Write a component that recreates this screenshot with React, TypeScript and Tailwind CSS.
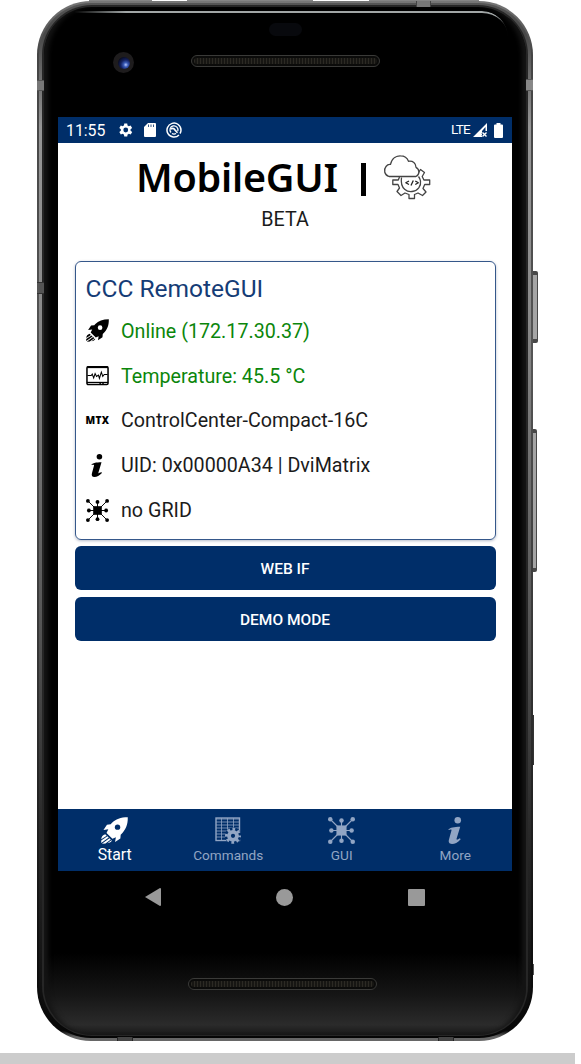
import React from "react";

function Rocket({ className, hole }: { className: string; hole: string }) {
  return (
    <svg viewBox="0 0 24 24" className={className} fill="currentColor">
      <path d="M23.800.2C17.500.2 13 1.800 9.800 5.200L8.600 6.500 5.300 6.900 2.200 11.600l4.300-.7-1.600 3.300 5.300 5.200 3-1.500-.7 4.300 4.700-3.200.3-3.300C22 11.500 24 6.800 23.800.2Z" />
      <circle cx="14.700" cy="9" r="2.400" fill={hole} />
      <path d="M3.800 15.300C1.500 16 .5 17.500.2 19.800l4.900-3.200ZM5.700 17.200.2 20.800v2.200l6.700-4.700ZM7.500 18.900.8 23.700l3.200-.2 4.700-3.400ZM9.200 20.600l-3.500 2.700c2.200-.3 3.400-1.200 4-2.400Z" />
    </svg>
  );
}

function Info({ className }: { className: string }) {
  return (
    <svg viewBox="0 0 24 24" className={className} fill="currentColor">
      <circle cx="14" cy="2.900" r="2.900" />
      <path d="M5.500 11.300C7.500 9.200 10.500 8.700 16.200 8.600l-3.200 10.600c-.4 1.500.8 1.100 2.900-.3l.7.9c-2.700 3-5.200 4.200-7.700 4.200-2.700 0-3.300-1.700-2.700-3.900l2.200-8c.3-1.200-.6-1.200-2.400-.5Z" />
    </svg>
  );
}

function Network({ className }: { className: string }) {
  return (
    <svg viewBox="0 0 24 24" className={className} fill="currentColor">
      <path d="M2 2 22 22M22 2 2 22M12 3v18M3 12h18" stroke="currentColor" strokeWidth="1" />
      <rect x="7.500" y="7.500" width="9" height="9" />
      {[[2, 2], [22, 2], [2, 22], [22, 22], [12, 3], [12, 21], [3, 12], [21, 12]].map(([x, y]) => (
        <circle key={`${x}-${y}`} cx={x} cy={y} r="2" />
      ))}
    </svg>
  );
}

function Monitor({ className }: { className: string }) {
  return (
    <svg viewBox="0 0 24 24" className={className} fill="none" stroke="currentColor">
      <rect x="1" y="3" width="22" height="18.400" rx="1.300" strokeWidth="1.600" />
      <path d="M1 3.300h22" strokeWidth="2" />
      <path d="M1 19.200h22" strokeWidth="1.200" />
      <path d="M14 20.400h1.500M17 20.400h1.500" strokeWidth="1.300" />
      <path d="M1.500 12h4l1-1.500 1.500 4L9.500 10l1.500 3 2-1.500 1 3.500 2-6.500 1.500 4.500 1.500-2H22.500" strokeWidth="1.100" />
    </svg>
  );
}

function Commands({ className }: { className: string }) {
  return (
    <svg viewBox="0 0 26 27" className={className} fill="none" stroke="currentColor">
      <rect x="1" y="1" width="23.500" height="22.500" strokeWidth="1.400" />
      <path d="M1 2h23M6.500 1v22M12.500 1v22M18.500 1v13M1 5h23M1 8h23M1 11h23M1 14h14M1 17h12M1 20h12" strokeWidth=".8" />
      <circle cx="18" cy="18.800" r="8.300" fill="#002e69" stroke="none" />
      <circle cx="18" cy="18.800" r="4" strokeWidth="3.800" />
      <circle cx="18" cy="18.800" r="6.500" strokeWidth="3" strokeDasharray="2.700 2.405" strokeDashoffset="1.350" />
    </svg>
  );
}

function CloudGear({ className }: { className: string }) {
  return (
    <svg viewBox="0 0 48 45" className={className} fill="none" stroke="#444" strokeWidth="1.300" strokeLinejoin="round">
      <path d="M35 18.500 37.500 14.500l4 3-2.300 4 1.700 3.500h5.800v4.500h-5l-1.700 4 3 3.500-3.500 3.500-4.500-2.500-3.500 1.500v4h-5.500v-4l-4-1.500-4 2.500-4-4 2.500-3.500-1.500-3.500H9.800v-4.500h5.500l1.200-3" />
      <path d="M18.500 22.500c-1.700 12 6.500 14.500 10.500 14 6-.6 9.300-5.700 8.500-10.500-.3-1.900-1-3.200-2-4.500" />
      <path d="M6 21.500C1.500 20 .2 15 3 11.500c1.500-2 3.500-2.300 4.500-2.100C9 2.500 14 .7 17.500.8c3.800 0 6.700 2 8 5.500 4.500-.6 7.300 1.900 7.500 6 4 2 3.700 7.500 0 9.200H6Z" fill="#fff" />
      <path d="m26 26-3.200 1.800L26 29.500M30.300 25.500l-2.300 5M32.300 26l3 1.800-3 1.700" stroke="#222" />
    </svg>
  );
}

function Speaker() {
  return (
    <div className="h-[12px] w-[189px] rounded-full border border-[#3a3a38] bg-[#0b0b0a] p-[2px]">
      <div className="h-full rounded-full bg-[repeating-linear-gradient(90deg,#2c2a24_0px,#2c2a24_1px,#171613_1px,#171613_3px)]" />
    </div>
  );
}

function Row({ icon, children, green = false }: { icon: React.ReactNode; children: React.ReactNode; green?: boolean }) {
  return (
    <div className={`flex h-[44.800px] items-center ${green ? "text-[#0b860b]" : "text-[#1b1b1b]"}`}>
      <div className="flex w-[35.500px] text-black">{icon}</div>
      <span className="whitespace-nowrap pt-[2px] text-[19.700px] leading-6">{children}</span>
    </div>
  );
}

function StatusBar() {
  return (
    <div className="flex h-[26px] items-center bg-[#002e69] pl-[8px] pr-[9px] text-white">
      <span className="w-[50px] pt-px text-[15.800px] leading-none">11:55</span>
      <svg viewBox="0 0 24 24" className="size-[18px]" fill="currentColor">
        <path d="M19.400 13c.1-.7.1-1.300 0-2l2.100-1.600-2-3.500-2.500 1a8 8 0 0 0-1.700-1L15 3.300h-4l-.4 2.600a8 8 0 0 0-1.700 1l-2.500-1-2 3.500L6.500 11a7 7 0 0 0 0 2l-2.100 1.600 2 3.500 2.500-1a8 8 0 0 0 1.700 1l.4 2.600h4l.4-2.600a8 8 0 0 0 1.700-1l2.500 1 2-3.500Z" />
        <circle cx="13" cy="12" r="3.200" fill="#002e69" />
      </svg>
      <svg viewBox="0 0 12 14" className="ml-[10px] h-[14px] w-[12px]" fill="currentColor">
        <path d="M4 0h7q1 0 1 1v12q0 1-1 1H1q-1 0-1-1V4Z" />
        <path d="M4.500 1.500v2.500M7 1.500v2.500M9.500 1.500v2.500" stroke="#002e69" strokeWidth=".8" />
      </svg>
      <svg viewBox="0 0 16 16" className="ml-[10px] size-[16px]" fill="none" stroke="currentColor">
        <path d="M13 13A7 7 0 1 1 15 8q0 2-1 3.500" strokeWidth="1.500" />
        <path d="M5 10.500A4 4 0 1 1 11.800 9M6 11.500a4 4 0 0 0 4 0" strokeWidth="1.300" />
        <path d="M5 7q2.500-1.500 4 1l2.500 2.800" strokeWidth="1.700" />
      </svg>
      <span className="ml-auto text-[13.500px] leading-none tracking-[-0.700px]">LTE</span>
      <svg viewBox="0 0 15 14" className="ml-[3px] h-[14px] w-[15px]" fill="currentColor">
        <path d="M0 14 14 0v8h-1.500V4L9 8v6Z" />
        <path d="m9.500 9.500 4 4M13.500 9.500l-4 4" stroke="#002e69" strokeWidth="3" />
        <path d="m9.500 9.500 4 4M13.500 9.500l-4 4" stroke="currentColor" strokeWidth="1.400" />
      </svg>
      <svg viewBox="0 0 9 15" className="ml-[6px] h-[15px] w-[9px]" fill="currentColor">
        <path d="M2.500 0h4v1.500H8q1 0 1 1V14q0 1-1 1H1q-1 0-1-1V2.500q0-1 1-1h1.500Z" />
      </svg>
    </div>
  );
}

function Tab({ icon, label, active = false }: { icon: React.ReactNode; label: string; active?: boolean }) {
  return (
    <div className={`flex w-1/4 flex-col items-center pt-[6px] ${active ? "text-white" : "text-[#91a5c4]"}`}>
      <div className="flex h-[30px] items-center">{icon}</div>
      <span className={active ? "text-[15.800px] leading-[20px]" : "text-[13.600px] leading-[20px]"}>{label}</span>
    </div>
  );
}

function Screen() {
  return (
    <div className="flex h-[754px] w-[454px] flex-col bg-white">
      <StatusBar />
      <header className="flex h-[118px] flex-col items-center">
        <div className="flex h-[60px] w-full items-start pl-[78px] pt-[12px]">
          <span className="mt-[-1px] w-[225px] whitespace-nowrap font-['Noto_Sans'] text-[39.500px] font-semibold leading-[46px] tracking-[-0.250px] text-black">MobileGUI</span>
          <span className="mt-[8px] h-[33px] w-[5px] bg-black" />
          <CloudGear className="ml-[17px] h-[45px] w-[48px]" />
        </div>
        <span className="mt-[5px] text-[19.700px] leading-6 text-[#1b1b1b]">BETA</span>
      </header>
      <main className="flex flex-1 flex-col px-[16.500px]">
        <section className="h-[279px] rounded-[6px] border-[1.500px] border-[#35578a] pl-[10px] pt-[14px] shadow-[0_1px_3px_rgba(0,30,80,0.300)]">
          <h1 className="-mt-px text-[24.500px] leading-[28px] text-[#153c76]">CCC RemoteGUI</h1>
          <div className="mt-[5.500px]">
            <Row green icon={<Rocket className="size-[23px]" hole="#fff" />}>Online (172.17.30.37)</Row>
            <Row green icon={<Monitor className="size-[23px]" />}>Temperature: 45.5 °C</Row>
            <Row icon={<span className="font-['Open_Sans'] text-[10px] font-extrabold tracking-[0.300px]">MTX</span>}>ControlCenter-Compact-16C</Row>
            <Row icon={<Info className="size-[23px]" />}>UID: 0x00000A34 | DviMatrix</Row>
            <Row icon={<Network className="size-[23px]" />}>no GRID</Row>
          </div>
        </section>
        <div className="mt-[6px] flex flex-col gap-[7px]">
          <button className="h-[44px] rounded-[6px] bg-[#002e69] pt-[4px] text-[15.500px] font-medium text-white">WEB IF</button>
          <button className="h-[44px] rounded-[6px] bg-[#002e69] pt-[4px] text-[15.500px] font-medium text-white">DEMO MODE</button>
        </div>
      </main>
      <nav className="flex h-[62px] bg-[#002e69]">
        <Tab active label="Start" icon={<Rocket className="size-[27px]" hole="#002e69" />} />
        <Tab label="Commands" icon={<Commands className="h-[27px] w-[26px]" />} />
        <Tab label="GUI" icon={<Network className="size-[27px]" />} />
        <Tab label="More" icon={<Info className="size-[27px]" />} />
      </nav>
    </div>
  );
}

export default function App() {
  return (
    <div className="flex h-[1064px] w-[581px] flex-col overflow-hidden bg-white font-[Roboto,sans-serif]">
      <div className="flex h-[1053px] pl-[37px] pt-px">
        <div className="relative h-[1040px] w-[496px]">
          <div className="absolute left-[52px] top-[-1px] h-[2px] w-[63px] bg-[#858585]" />
          <div className="absolute left-[150px] top-[-1px] h-[2px] w-[126px] bg-[#858585]" />
          <div className="absolute left-[332px] top-[-1px] h-[2px] w-[110px] bg-[#858585]" />
          <div className="absolute left-[494px] top-[270px] h-[72px] w-[7px] rounded-r-[2px] border-y-[4px] border-r border-[#484848] bg-[#a5a5a5]" />
          <div className="absolute left-[494px] top-[428px] h-[143px] w-[6px] rounded-r-[2px] border-y-[4px] border-r border-[#484848] bg-[#a5a5a5]" />
          <div className="absolute left-[494px] top-[714px] h-[50px] w-[3px] bg-[#333]" />
          <div className="absolute left-[494px] top-[963px] h-[11px] w-[3px] bg-[#555]" />
          <div className="relative h-full rounded-[54px] bg-[linear-gradient(180deg,#777_0%,#444_5%,#555_35%,#333_65%,#111_90%,#080808_99%,#666_99.600%)] px-[2px] pb-[3px] pt-[2px]">
            <div className="h-full rounded-[52px] bg-[linear-gradient(180deg,#555_0%,#484848_3%,#969696_12%,#8a8a8a_30%,#555_60%,#292929_80%,#111_95%,#050505_100%)] px-[3px] pb-[2px] pt-[2px]">
              <div className="h-full rounded-[50px] bg-[#262626] px-[2px] pb-[1px] pt-[2px]">
                <div className="relative flex h-full flex-col items-center rounded-[48px] bg-[linear-gradient(180deg,#000_0%,#000_92%,#151515_96%,#2b2b2b_99%,#181818_100%)] shadow-[inset_7px_0_5px_-3px_#151515,inset_-7px_0_5px_-3px_#151515]">
                  <div className="absolute left-[30px] right-[18px] top-[4px] h-[26px] rounded-tr-[36px] border-t-2 border-[#a1a6a6] [mask-image:linear-gradient(90deg,transparent,#000_12%,#000_97%,transparent)]" />
                  <div className="absolute left-[69px] top-[45px] flex size-[21px] items-center justify-center rounded-full bg-[#1e1c1d]">
                    <div className="size-[12px] rounded-full bg-[radial-gradient(circle_at_65%_65%,#b7c9ff_0%,#395ab6_20%,#142260_45%,#080b20_75%)]" />
                  </div>
                  <div className="flex h-[110px] w-full flex-col items-center pt-[16px]">
                    <div className="h-[13px] w-[33px] rounded-full bg-[#08090d]" />
                    <div className="mt-[19px]"><Speaker /></div>
                  </div>
                  <Screen />
                  <div className="mr-px flex h-[52px] w-[280px] items-center justify-between">
                    <svg viewBox="0 0 16 18" className="h-[18px] w-[16px]" fill="#999"><path d="M0 9 15 0q1 0 1 1v16q0 1-1 1Z" /></svg>
                    <div className="size-[17px] rounded-full bg-[#999]" />
                    <div className="size-[17px] rounded-[1px] bg-[#999]" />
                  </div>
                  <div className="mr-[6px] mt-[55px]"><Speaker /></div>
                </div>
              </div>
            </div>
          </div>
          <div className="absolute left-0 top-[79px] h-[11px] w-[7px] border-y border-[#555] bg-[#777]" />
          <div className="absolute left-0 top-[281px] h-[12px] w-[7px] border-y border-[#333] bg-[#555]" />
          <div className="absolute left-[489px] top-[78px] h-[12px] w-[7px] border-y border-[#555] bg-[#888]" />
          <div className="absolute left-[379px] top-0 h-[6px] w-[15px] border-x border-[#444] bg-[#777]" />
          <div className="absolute left-[80px] top-[1036px] h-[4px] w-[16px] border-x border-[#222] bg-[#444]" />
          <div className="absolute left-[401px] top-[1036px] h-[4px] w-[16px] border-x border-[#222] bg-[#444]" />
        </div>
      </div>
      <footer className="h-[11px] w-[575px] bg-[#ccc]" />
    </div>
  );
}
